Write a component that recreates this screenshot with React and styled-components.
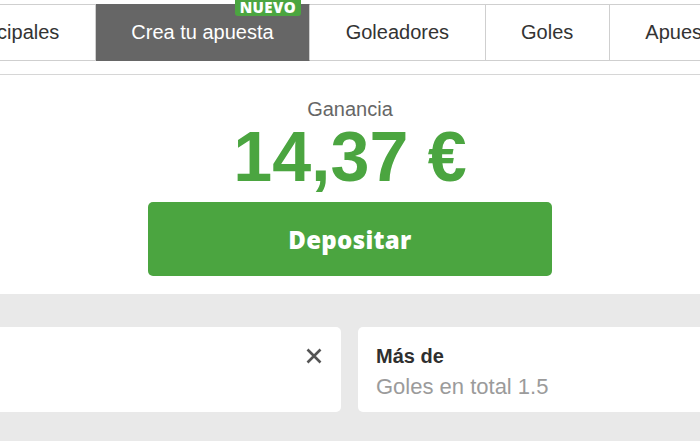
import React from "react";
import styled, { createGlobalStyle } from "styled-components";

const Global = createGlobalStyle`
  html, body { margin: 0; padding: 0; background: #fff; }
  body { font-family: "Liberation Sans", Arial, sans-serif; overflow: hidden; }
  * { box-sizing: border-box; }
`;

const Page = styled.div`
  width: 700px;
  height: 441px;
  overflow: hidden;
  background: #fff;
  display: flex;
  flex-direction: column;
`;

const TabTrack = styled.div`
  display: flex;
  margin-top: 4px;
  margin-left: -74px;
  width: max-content;
`;

const Tab = styled.div`
  position: relative;
  height: 57px;
  padding: 0 35.5px;
  display: flex;
  align-items: center;
  justify-content: center;
  font-size: 20px;
  white-space: nowrap;
  border-top: 1px solid ${(p) => (p.$active ? "#666" : "#cfcfcf")};
  border-bottom: 1px solid ${(p) => (p.$active ? "#666" : "#cfcfcf")};
  border-right: 1px solid #cfcfcf;
  background: ${(p) => (p.$active ? "#666" : "#fff")};
  color: ${(p) => (p.$active ? "#fff" : "#333")};
`;

const Badge = styled.span`
  position: absolute;
  right: 8px;
  top: -5px;
  height: 16px;
  padding: 0 5px;
  background: #4ba540;
  border-radius: 0 0 3px 3px;
  color: #fff;
  font-family: "Open Sans", sans-serif;
  font-weight: 800;
  font-size: 15px;
  line-height: 14px;
  letter-spacing: 0.4px;
`;

const Divider = styled.div`
  margin-top: 13px;
  height: 1px;
  background: #d6d6d6;
`;

const Summary = styled.div`
  display: flex;
  flex-direction: column;
  align-items: center;
  padding: 22px 0 18px;
`;

const Label = styled.div`
  font-size: 20px;
  line-height: 24px;
  color: #666;
`;

const Amount = styled.div`
  font-size: 70px;
  line-height: 72px;
  font-weight: 700;
  color: #4ba540;
`;

const DepositButton = styled.button`
  margin-top: 9px;
  width: 404px;
  height: 74px;
  border: none;
  border-radius: 5px;
  background: #4ba540;
  color: #fff;
  font-family: "Open Sans", sans-serif;
  font-weight: 800;
  font-size: 24px;
  letter-spacing: 0.3px;
  cursor: pointer;
`;

const Selections = styled.div`
  flex: 1;
  background: #e9e9e9;
  padding-top: 33px;
`;

const CardRow = styled.div`
  display: grid;
  grid-template-columns: 401px 400px;
  gap: 17px;
  margin-left: -60px;
`;

const Card = styled.div`
  height: 85px;
  background: #fff;
  border-radius: 5px;
  padding: 17px 18px;
  display: flex;
  flex-direction: ${(p) => (p.$closable ? "row" : "column")};
  justify-content: ${(p) => (p.$closable ? "flex-end" : "flex-start")};
  align-items: ${(p) => (p.$closable ? "flex-start" : "stretch")};
`;

const CloseButton = styled.button`
  margin-top: 3px;
  width: 18px;
  height: 18px;
  padding: 0;
  border: none;
  background: none;
  display: flex;
  align-items: center;
  justify-content: center;
  color: #555;
`;

const CardTitle = styled.div`
  font-size: 20px;
  line-height: 24px;
  font-weight: 700;
  color: #2f2f2f;
`;

const CardSub = styled.div`
  margin-top: 6px;
  font-size: 22px;
  line-height: 26px;
  color: #9b9b9b;
`;

const tabs = [
  { label: "Principales" },
  { label: "Crea tu apuesta", active: true, badge: "NUEVO" },
  { label: "Goleadores" },
  { label: "Goles" },
  { label: "Apuestas especiales" },
];

export default function App() {
  return (
    <Page>
      <Global />
      <TabTrack>
        {tabs.map((t) => (
          <Tab key={t.label} $active={t.active}>
            {t.label}
            {t.badge && <Badge>{t.badge}</Badge>}
          </Tab>
        ))}
      </TabTrack>
      <Divider />
      <Summary>
        <Label>Ganancia</Label>
        <Amount>14,37 €</Amount>
        <DepositButton>Depositar</DepositButton>
      </Summary>
      <Selections>
        <CardRow>
          <Card $closable>
            <CloseButton aria-label="Cerrar">
              <svg width="16" height="16" viewBox="0 0 16 16">
                <path
                  d="M1.5 1.5 L14.5 14.5 M14.5 1.5 L1.5 14.5"
                  stroke="currentColor"
                  strokeWidth="2.6"
                  strokeLinecap="butt"
                />
              </svg>
            </CloseButton>
          </Card>
          <Card>
            <CardTitle>Más de</CardTitle>
            <CardSub>Goles en total 1.5</CardSub>
          </Card>
        </CardRow>
      </Selections>
    </Page>
  );
}
